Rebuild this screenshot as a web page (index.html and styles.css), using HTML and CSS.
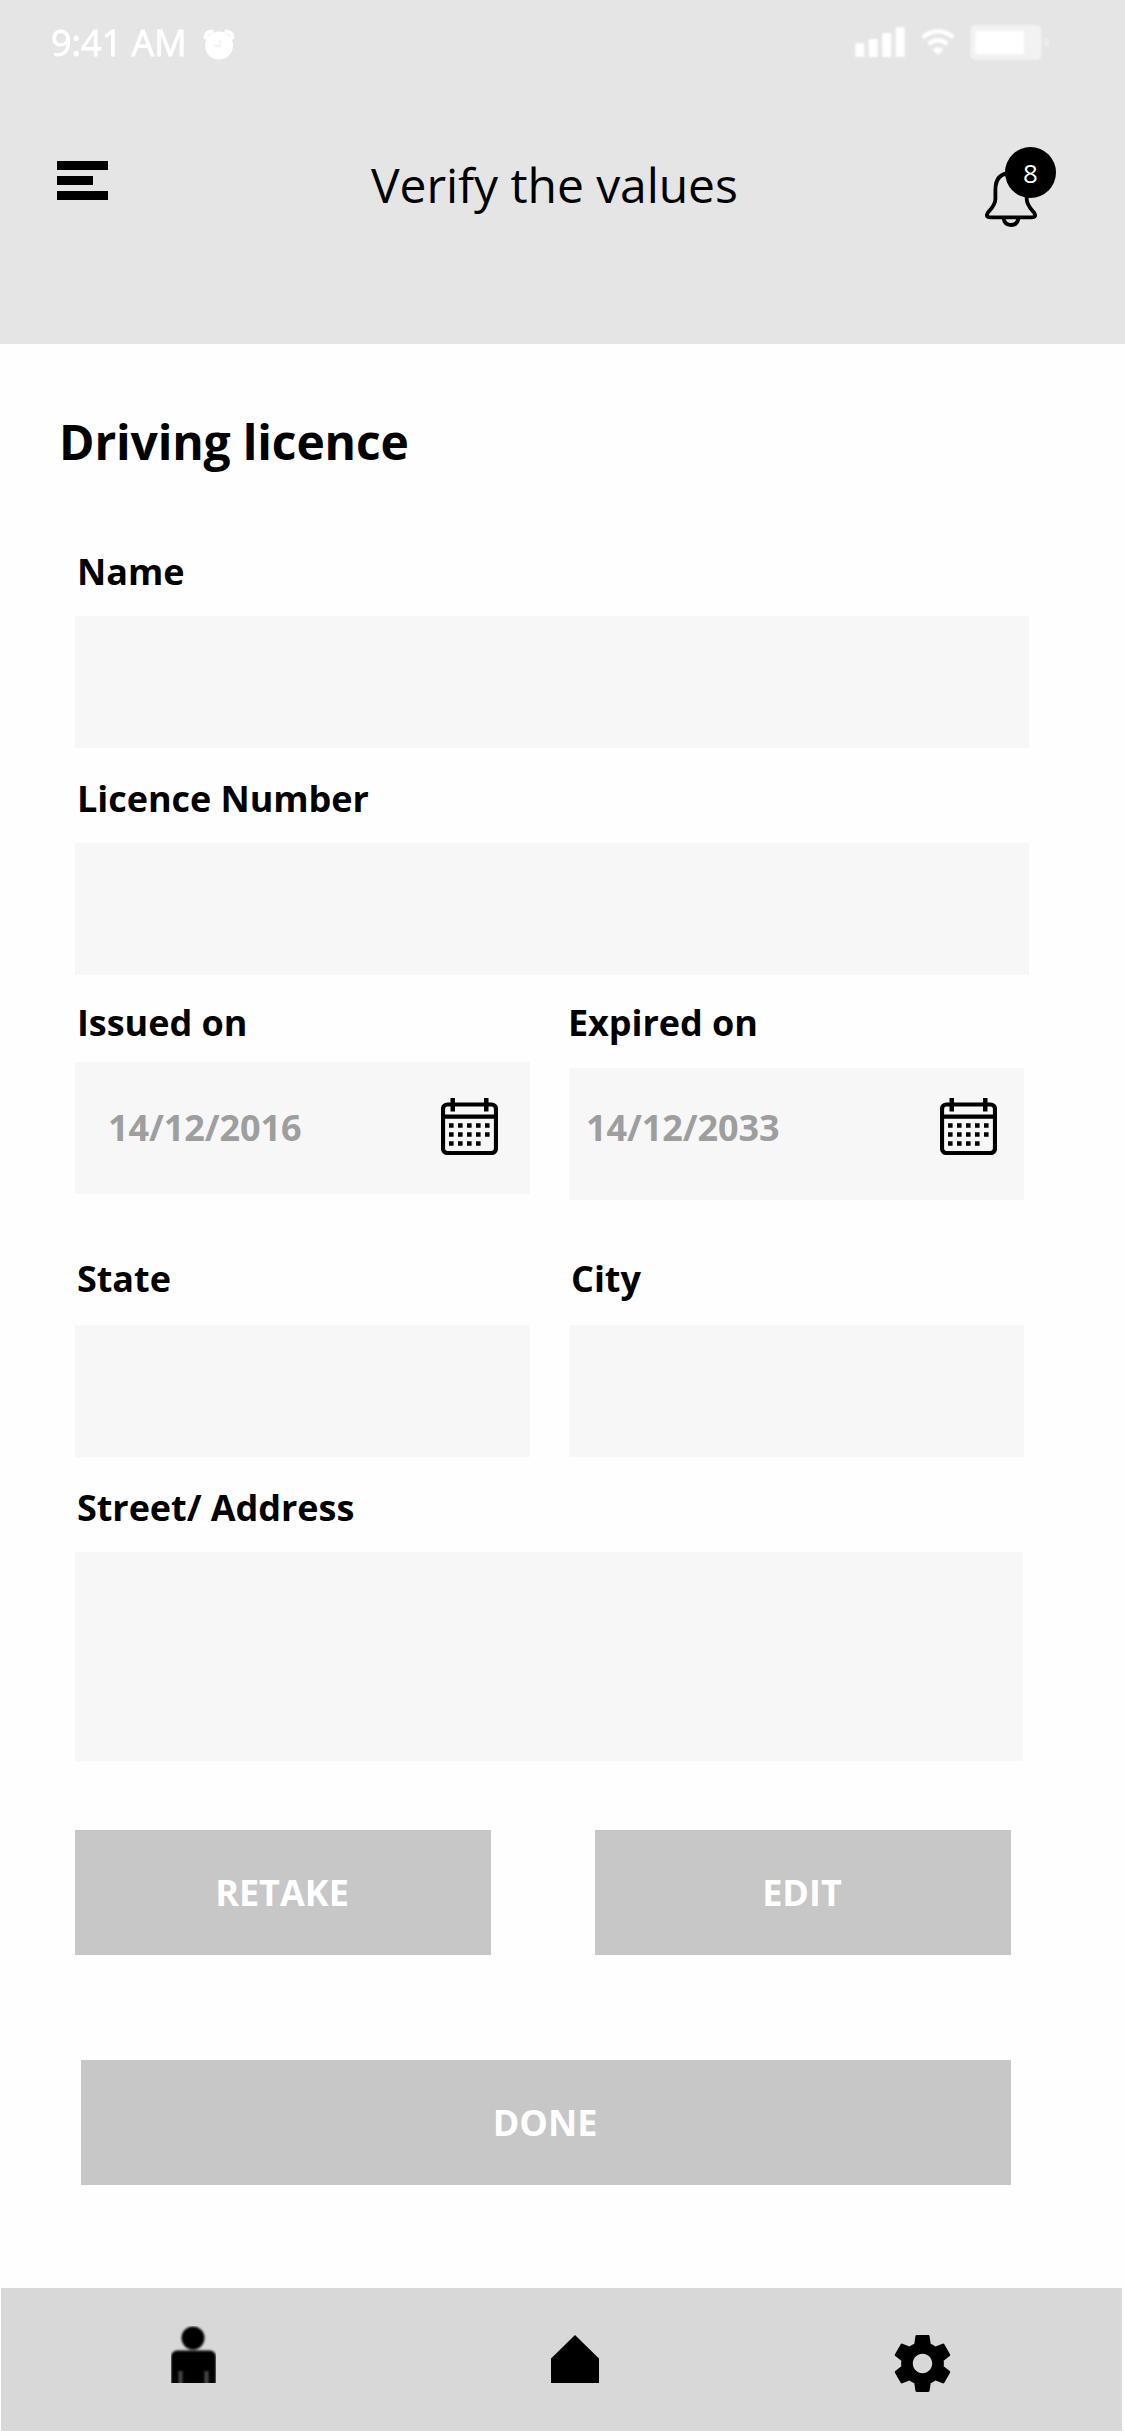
FILE: index.html
```html
<!DOCTYPE html>
<html lang="en">
<head>
<meta charset="utf-8">
<title>Verify the values</title>
<link rel="stylesheet" href="styles.css">
</head>
<body>
<header class="header">
  <div class="status">
    <div class="status-left">
      <span class="clock">9:41 AM</span>
      <svg class="alarm" width="32" height="32" viewBox="0 0 32 32">
        <circle cx="16" cy="16.500" r="14" fill="#fff"/>
        <path d="M2.500 8.500Q3 3 8.500 2.500M23.500 2.500Q29 3 29.500 8.500" fill="none" stroke="#fff" stroke-width="4" stroke-linecap="round"/>
        <path d="M17 11v6h-6" fill="none" stroke="#f4f4f4" stroke-width="2.500"/>
      </svg>
    </div>
    <svg class="signals" width="196" height="38" viewBox="854 24 196 38">
      <g fill="#fff">
        <rect x="855.300" y="43" width="9" height="14" rx="1"/>
        <rect x="868.700" y="39" width="9" height="18" rx="1"/>
        <rect x="882.300" y="33" width="9" height="24" rx="1"/>
        <rect x="895.700" y="27" width="9" height="30" rx="1"/>
        <path d="M938 55l-5.500-5.500q5.500-4.500 11 0z"/>
      </g>
      <path d="M922.500 37.500q15.500-12.500 31 0M928.500 44q9.500-7.500 19 0" fill="none" stroke="#fff" stroke-width="4.200"/>
      <rect x="970.500" y="25" width="71" height="35" rx="5" fill="#f2f2f2"/>
      <rect x="975.500" y="31" width="48.500" height="23" rx="1.500" fill="#fff"/>
      <path fill="#efefef" d="M1045 38q4 1 4 4.500t-4 4.500z"/>
    </svg>
  </div>
  <div class="topbar">
    <svg class="menu" width="51" height="39" viewBox="0 0 51 39">
      <path d="M0 0h51v9H0zM0 15h36v9H0zM0 30h51v9H0z"/>
    </svg>
    <div class="title">Verify the values</div>
    <div class="bell">
      <svg width="54" height="57" viewBox="984 171 54 57" fill="none" stroke="#000" stroke-width="3.800">
        <path d="M995.400 190Q995.400 173 1011 173T1026.700 190V199C1026.700 205 1031 209 1034 212.500Q1037 217.300 1032 217.300H990Q985 217.300 988 212.500C991 209 995.400 205 995.400 199Z"/>
        <path d="M1003.500 218Q1004.500 225 1011 225T1018.500 218"/>
      </svg>
      <span class="badge">8</span>
    </div>
  </div>
</header>

<main class="content">
  <h1 class="heading">Driving licence</h1>
  <div class="field name">
    <div class="label">Name</div>
    <div class="box"></div>
  </div>
  <div class="field number">
    <div class="label">Licence Number</div>
    <div class="box"></div>
  </div>
  <div class="pair dates">
    <div class="field issued">
      <div class="label">Issued on</div>
      <div class="box date">
        <span>14/12/2016</span>
        <svg class="calendar" width="57" height="57" viewBox="0 0 57 57">
          <rect x="2" y="6.500" width="53" height="48.500" rx="4.500" fill="none" stroke="#000" stroke-width="4.200"/>
          <path d="M2 16.500h53v4.200H2zM9.500 0h4.500v13.500H9.500zM43 0h4.500v13.500H43z"/>
          <path d="M8 27.500h46M8 36.500h46M8 45.500h36" fill="none" stroke="#000" stroke-width="4.500" stroke-dasharray="4.600 4.400"/>
        </svg>
      </div>
    </div>
    <div class="field expired">
      <div class="label">Expired on</div>
      <div class="box date">
        <span>14/12/2033</span>
        <svg class="calendar" width="57" height="57" viewBox="0 0 57 57">
          <rect x="2" y="6.500" width="53" height="48.500" rx="4.500" fill="none" stroke="#000" stroke-width="4.200"/>
          <path d="M2 16.500h53v4.200H2zM9.500 0h4.500v13.500H9.500zM43 0h4.500v13.500H43z"/>
          <path d="M8 27.500h46M8 36.500h46M8 45.500h36" fill="none" stroke="#000" stroke-width="4.500" stroke-dasharray="4.600 4.400"/>
        </svg>
      </div>
    </div>
  </div>
  <div class="pair places">
    <div class="field">
      <div class="label">State</div>
      <div class="box"></div>
    </div>
    <div class="field city">
      <div class="label">City</div>
      <div class="box"></div>
    </div>
  </div>
  <div class="field address">
    <div class="label">Street/ Address</div>
    <div class="box tall"></div>
  </div>
  <div class="actions">
    <div class="button">RETAKE</div>
    <div class="button">EDIT</div>
  </div>
  <div class="button done">DONE</div>
</main>

<nav class="tabs">
  <svg class="tab-profile" width="45" height="57" viewBox="0 0 45 57">
    <g class="soft">
      <circle cx="22" cy="12" r="11.500"/>
      <path d="M0 60V30Q1 25 6 24.500H39Q44 25 45 30V60z"/>
      <path d="M9.500 45v14M35.500 45v14" stroke="#484848" stroke-width="4"/>
    </g>
  </svg>
  <svg class="tab-home" width="48" height="48" viewBox="0 0 48 48">
    <path d="M24 0L48 23.500V48H0V23.500z"/>
  </svg>
  <svg class="tab-settings" width="57" height="57" viewBox="2 2 20 20">
    <path d="M19.430 12.980c.04-.32.07-.64.07-.98s-.03-.66-.07-.98l2.110-1.650c.19-.15.24-.42.12-.64l-2-3.460c-.12-.22-.39-.3-.61-.22l-2.490 1c-.52-.4-1.080-.73-1.690-.98l-.38-2.650C14.460 2.180 14.250 2 14 2h-4c-.25 0-.46.18-.49.42l-.38 2.650c-.61.25-1.170.59-1.690.98l-2.490-1c-.23-.09-.49 0-.61.22l-2 3.460c-.13.22-.07.49.12.64l2.110 1.650c-.04.32-.07.65-.07.98s.03.66.07.98l-2.110 1.650c-.19.15-.24.42-.12.64l2 3.460c.12.22.39.3.61.22l2.490-1c.52.4 1.080.73 1.690.98l.38 2.650c.03.24.24.42.49.42h4c.25 0 .46-.18.49-.42l.38-2.650c.61-.25 1.170-.59 1.690-.98l2.490 1c.23.09.49 0 .61-.22l2-3.460c.12-.22.07-.49-.12-.64l-2.110-1.650zM12 15.400c-1.880 0-3.400-1.520-3.400-3.400s1.520-3.400 3.400-3.400 3.400 1.520 3.400 3.400-1.520 3.400-3.400 3.400z"/>
  </svg>
</nav>
</body>
</html>
```
FILE: styles.css
```css
* { box-sizing: border-box; }

body {
  margin: 0;
  width: 1125px;
  height: 2436px;
  display: flex;
  flex-direction: column;
  background: #fefefe;
  color: #000;
  font-family: "Open Sans", sans-serif;
}

svg { display: block; flex: none; }

.header {
  height: 344px;
  background: #e5e5e5;
}

.status {
  height: 84px;
  padding: 19px 75px 0 51px;
  display: flex;
  justify-content: space-between;
}

.status-left {
  display: flex;
  color: #fff;
  filter: blur(.7px);
}

.clock {
  width: 152px;
  font-size: 36px;
  line-height: 48px;
  white-space: nowrap;
  -webkit-text-stroke: .8px #fff;
}

.alarm { margin-top: 10px; }

.signals {
  margin-top: 5px;
  filter: blur(.8px);
}

.topbar {
  display: flex;
  align-items: flex-start;
  padding-left: 57px;
}

.menu { margin-top: 77px; }

.title {
  margin: 69px 0 0 263px;
  width: 613px;
  font-size: 48px;
  line-height: 64px;
  letter-spacing: -.07px;
  white-space: nowrap;
}

.bell {
  position: relative;
  margin-top: 87px;
}

.badge {
  position: absolute;
  left: 21px;
  top: -24px;
  width: 51px;
  height: 51px;
  border-radius: 50%;
  background: #000;
  color: #fff;
  font-size: 26px;
  line-height: 52px;
  text-align: center;
}

.content {
  height: 1944px;
  padding: 66px 0 0 75px;
}

.heading {
  margin: 0 0 0 -16px;
  font-size: 48px;
  font-weight: 700;
  line-height: 64px;
  letter-spacing: -.15px;
}

.label {
  padding-left: 2px;
  margin-bottom: 19px;
  font-size: 36px;
  font-weight: 700;
  line-height: 50px;
  letter-spacing: -.05px;
  white-space: nowrap;
}

.box {
  height: 132px;
  background: #f7f7f7;
}

.name { width: 954px; margin-top: 73px; }
.number { width: 954px; margin-top: 26px; }

.pair {
  display: grid;
  grid-template-columns: 455px 455px;
  column-gap: 39px;
}

.dates { margin-top: 23px; }
.issued .label { margin-bottom: 14px; }
.expired .label { margin-bottom: 20px; padding-left: 0; margin-left: -1px; }

.date {
  display: flex;
  justify-content: space-between;
  padding: 42px 32px 0 33px;
  color: #9e9e9e;
  font-size: 36px;
  font-weight: 700;
  line-height: 48px;
  letter-spacing: -.1px;
}

.calendar { margin-top: -6px; }
.expired .date { padding: 36px 27px 0 17px; }

.places { margin-top: 54px; }
.places .label { margin-bottom: 21px; }

.address { width: 948px; margin-top: 26px; }
.tall { height: 209px; }

.actions {
  display: grid;
  grid-template-columns: 416px 416px;
  column-gap: 104px;
  margin-top: 69px;
}

.button {
  height: 125px;
  padding-right: 2px;
  background: #c7c7c7;
  color: #fff;
  font-size: 36px;
  font-weight: 700;
  line-height: 125px;
  text-align: center;
}

.done {
  width: 930px;
  margin: 105px 0 0 6px;
}

.tabs {
  width: 1121px;
  height: 143px;
  margin-left: 1px;
  padding-left: 170px;
  display: flex;
  background: #d8d8d8;
}

.soft { filter: blur(.8px); }

.tab-profile { margin-top: 38px; }
.tab-home { margin: 47px 0 0 335px; }
.tab-settings { margin: 47px 0 0 295px; }
```
